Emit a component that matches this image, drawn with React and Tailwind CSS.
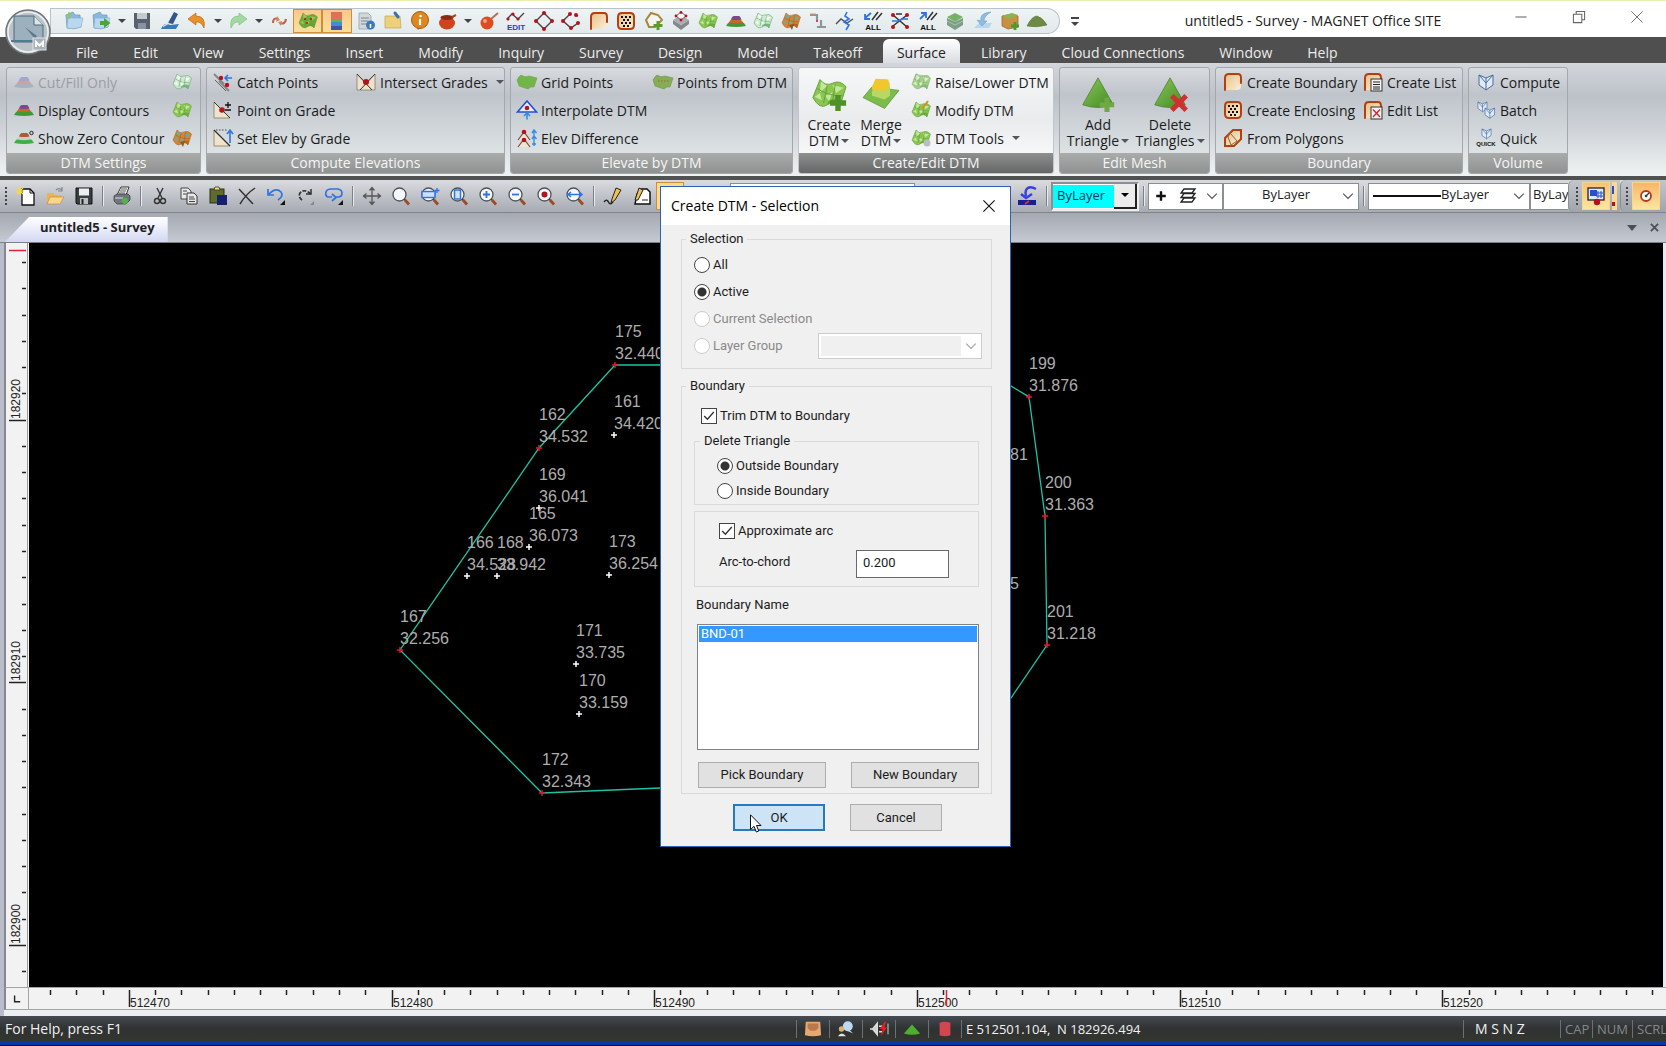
import { useState } from "react";
import clsx from "clsx";

/* ---------- icon building blocks (20 x 20 box) ---------- */

function Icon({ children, className = "size-5" }) {
  return (
    <svg viewBox="0 0 20 20" className={clsx("shrink-0 overflow-visible", className)} fill="none" aria-hidden="true">
      {children}
    </svg>
  );
}

const Dot = ({ x, y, r = 2 }) => <circle cx={x} cy={y} r={r} fill="#b5121b" />;

const Mesh = ({ fill = "#8bc653", light = "#c3e89a", dark = "#5f9f36" }) => (
  <>
    <path d="M5 2 Q8 6 12 4 T19.500 6 L16 17 Q13 13 9 16 T1 12 Z" fill={fill} stroke={dark} strokeWidth=".5" />
    <path d="M5.500 3 L9 5.500 L5 9 Z M12 5 L18 6.500 L14 9.500 Z M8 11 L12 9 L10 14 Z M2 11.500 L5 9.500 L6 13.500 Z" fill={light} />
    <path d="M3.500 7 Q9 11 17.500 11 M9 5.500 L7 15 M13.500 4.500 L12 14" stroke={dark} strokeWidth=".5" />
    <path d="M9 16 Q13 13 16 17 L17 13 Q13 11.500 9.500 14 Z" fill={dark} opacity=".7" />
  </>
);

const Mound = ({ top = "#7b4a8a", mid = "#c06a2c", low = "#3f9a34" }) => (
  <>
    <path d="M0 15 Q3 10 6 10 H14 Q17 10 20 15 Q10 17 0 15 Z" fill={low} />
    <path d="M3 11.500 Q5 7.500 7 7.500 H13 Q15 8 17 11.500 Q10 13 3 11.500 Z" fill={mid} />
    <path d="M5 8.500 Q6 5 8 5 H13 Q14 5 15.500 8.500 Q10 9.500 5 8.500 Z" fill={top} />
  </>
);

const Plate = ({ d = "M2 18 V6 Q2 2 6 2 H15 Q18 2 18 6 V11" }) => (
  <>
    <path d="M2 18 V6 Q2 2 6 2 H15 Q18 2 18 6 V14 Q18 18 14 18 Z" fill="url(#tan)" />
    <path d={d} stroke="#b5400f" strokeWidth="2" strokeLinecap="round" />
  </>
);

const Triangle = () => (
  <path d="M10 1 L18.500 16 Q10 19 1.500 16 Z" fill="url(#treeGreen)" stroke="#4a7a28" strokeWidth=".4" />
);

const Lens = ({ children }) => (
  <>
    <path d="M12.500 12.500 L14 14" stroke="#333" strokeWidth="2.400" />
    <path d="M14 14 L18 18.500" stroke="#a04a22" strokeWidth="2.800" />
    <circle cx="8.500" cy="8.500" r="6.500" fill="#f4f8fb" stroke="#4d5359" strokeWidth="1.300" />
    {children}
  </>
);

const Cube = () => (
  <>
    <path d="M3 3 L10 6 L17 3 V13 L10 18 L3 13 Z" fill="#dfeaf8" stroke="#4a6a9c" />
    <path d="M10 6 V18 M3 3 L10 11 L17 3" stroke="#4a6a9c" />
  </>
);

const Fold = () => (
  <>
    <path d="M2 4 L9 1 L11 4 H16 L17 16 Q10 19 3 17 Z" fill="#8db8dd" stroke="#6b96bd" strokeWidth=".7" />
    <path d="M4 7 H19 L17 16 Q10 19 3 17 Z" fill="#b9d8f0" stroke="#7ba6cc" strokeWidth=".5" />
  </>
);

const SmallText = ({ children, fill = "#111", y = 19, size = 8 }) => (
  <text x="10" y={y} textAnchor="middle" fontSize={size} fontWeight="700" fontFamily="Liberation Sans, sans-serif" fill={fill}>
    {children}
  </text>
);

const art = {
  newJob: <><Fold /><path d="M5 1 V8 M1.500 4.500 H8.500" stroke="#8ccc4e" strokeWidth="1.500" /></>,
  openJob: <><Fold /><path d="M9 10 H13 V7 L19.500 12 L13 17 V14 H9 Z" fill="#4aa63a" /></>,
  disk: <><path d="M2 2 H18 V18 H4 L2 16 Z" fill="#59616c" /><rect x="5" y="2" width="10" height="6" fill="#c3cad3" /><rect x="6" y="12" width="8" height="6" fill="#8993a0" /></>,
  survey: <><path d="M8 12 L14 1 L18 3 L13 13 Z" fill="#35568a" /><path d="M1 18 Q4 11 10 14 L19 13 L16 18 Z" fill="#3f78b8" /><path d="M3 15.500 L9 12" stroke="#d9e6f2" strokeWidth="1.300" /></>,
  undo: <path d="M1 8 L9 2 V5 Q19 5 17 17 Q14 10 9 11 V14 Z" fill="#e8912a" stroke="#b96a12" strokeWidth=".7" />,
  redo: <path d="M19 8 L11 2 V5 Q1 5 3 17 Q6 10 11 11 V14 Z" fill="#a3d9a0" stroke="#7fbf83" strokeWidth=".7" />,
  sync: <><path d="M4 12 Q4 6 9 8 M17 8 Q16 14 11 12" stroke="#c7604d" strokeWidth="2.200" /><path d="M8 5 L11 9 L7 11 Z M12 15 L9 11 L13 10 Z" fill="#d08a5e" /></>,
  meshDots: <><Mesh fill="#6ea834" light="#95c95a" /><Dot x={7} y={8} r={1} /><Dot x={13} y={8} r={1} /><Dot x={9} y={12} r={1} /></>,
  legend: <><rect x="4" y="1" width="11" height="7" fill="#e0705a" /><rect x="4" y="8" width="11" height="3" fill="#6bb04a" /><rect x="4" y="11" width="11" height="4" fill="#3c8fd0" /><rect x="4" y="15" width="11" height="4" fill="#4353a8" /></>,
  docInfo: <><path d="M3 2 H12 L15 5 V18 H3 Z" fill="#d2d7db" stroke="#9aa2a8" strokeWidth=".8" /><path d="M5 7 H13 M5 10 H12 M5 13 H11" stroke="#7e878e" /><circle cx="14.500" cy="14" r="4.500" fill="#3a79bd" /><path d="M14.500 13 V17" stroke="#fff" strokeWidth="1.600" /></>,
  note: <><path d="M2 5 H17 L18 17 H2 Z" fill="#ecd07a" stroke="#c5a448" strokeWidth=".7" /><path d="M12 2 L15 6" stroke="#3e6fb5" strokeWidth="3" strokeLinecap="round" /></>,
  info: <><path d="M6 15 L8 19 L12 15 Z" fill="#c87414" /><circle cx="10" cy="9" r="8.500" fill="#dd8720" stroke="#a85f10" /><path d="M10 8 V14" stroke="#fff" strokeWidth="2.200" /><circle cx="10.500" cy="5" r="1.300" fill="#fff" /></>,
  pot: <><ellipse cx="9" cy="12" rx="8" ry="6.500" fill="#d0431f" /><ellipse cx="9" cy="6.500" rx="6.500" ry="2.500" fill="#8c2b14" /><path d="M14 6 L18 4" stroke="#a44d20" strokeWidth="2" /></>,
  bomb: <><circle cx="8" cy="12" r="6.500" fill="#e04a22" /><circle cx="6" cy="10" r="2" fill="#f5a07c" /><path d="M12 8 L19 2" stroke="#a87850" strokeWidth="2" /></>,
  edit: <><path d="M1 8 L6 3 L12 8 L18 2" stroke="#444" strokeWidth="1.300" /><Dot x={2} y={8} r={1.600} /><Dot x={7} y={3} r={1.600} /><Dot x={12} y={8} r={1.600} /><SmallText fill="#1c3fd1">EDIT</SmallText></>,
  diamond: <><path d="M10 2 L18 10 L10 18 L2 10 Z" stroke="#444" strokeWidth="1.400" /><Dot x={10} y={2} /><Dot x={18} y={10} /><Dot x={10} y={18} /><Dot x={2} y={10} /></>,
  diamondOpen: <><path d="M15 4 L17 5 M9 3 L2 10 L10 17 L17 12" stroke="#444" strokeWidth="1.400" /><Dot x={15} y={4} /><Dot x={9} y={3} /><Dot x={2} y={10} /><Dot x={10} y={17} /><Dot x={17} y={12} /></>,
  plate: <Plate />,
  plateDots: (
    <>
      <Plate d="M2 6 Q2 2 6 2 H14 Q18 2 18 6 V14 Q18 18 14 18 H6 Q2 18 2 14 Z" />
      {[[6, 6], [10, 6], [14, 6], [8, 9], [12, 9], [6, 12], [10, 12], [14, 12], [8, 15], [12, 15]].map(([x, y]) => (
        <rect key={`${x}-${y}`} x={x - 1} y={y - 1} width="2" height="2" fill="#111" />
      ))}
    </>
  ),
  hexAdd: <><path d="M2 9 L7 2 L14 4 L18 9 L11 16 H5 Z" fill="#f6f4ee" stroke="#a8853f" strokeWidth="2" /><path d="M14 10 V19 M9.500 14.500 H18.500" stroke="#5b9a2c" strokeWidth="3" /></>,
  block: <><path d="M2 9 L10 14 L18 9 V13 L10 19 L2 13 Z" fill="#85898e" /><path d="M10 4 L18 9 L10 14 L2 9 Z" fill="#a9adb2" /><path d="M10 1 L15 5 L10 9 L5 5 Z" fill="#f4f4f4" stroke="#666" /><Dot x={10} y={1.500} r={1.400} /><Dot x={15} y={5} r={1.400} /><Dot x={5} y={5} r={1.400} /><Dot x={10} y={9} r={1.400} /></>,
  mesh: <Mesh />,
  mound: <Mound />,
  meshWire: <Mesh fill="#cfe8cf" light="#f2faf2" dark="#4fa35a" />,
  meshWarm: <><Mesh fill="#d98233" light="#5fb3a0" dark="#a45a1c" /><path d="M8 14 L13 13 L11 19 Z" fill="#8a5a2b" /></>,
  steps: <><path d="M2 4 H9 V9 M9 16 H17 M13 9 V16 H18" stroke="#8f9499" strokeWidth="2.200" /><Dot x={9} y={10} r={1} /><path d="M2 3 H8" stroke="#c2a35c" /></>,
  breakline: <><path d="M1 13 L6 8 L12 12 L18 8" stroke="#555" strokeWidth="1.500" /><path d="M12 1 L10 5 L14 8 L9 11 L14 14 L11 19" stroke="#2f74e0" strokeWidth="1.600" /></>,
  allDown: <><path d="M8 2 L2 7 M2 3 V8 H7" stroke="#2f74e0" strokeWidth="1.800" /><path d="M15 1 L9 9 M19 2 L13 9" stroke="#333" strokeWidth="1.500" /><SmallText>ALL</SmallText></>,
  cross: <><path d="M3 4 L17 16 M3 15 L17 4 M6 3 H12" stroke="#333" strokeWidth="1.500" /><path d="M2 10 H8 L12 8 H18" stroke="#2f74e0" strokeWidth="1.500" /><Dot x={3} y={4} /><Dot x={17} y={4} /><Dot x={3} y={16} /><Dot x={17} y={16} /></>,
  allUp: <><path d="M2 8 L8 2 M3 2 H8 V7" stroke="#2f74e0" strokeWidth="1.800" /><path d="M15 1 L9 9 M19 2 L13 9" stroke="#333" strokeWidth="1.500" /><SmallText>ALL</SmallText></>,
  layersGreen: <><path d="M2 7 L10 11 L18 7 V14 L10 19 L2 14 Z" fill="#7f9c86" /><path d="M2 6 L10 2 L18 6 L10 11 Z" fill="#74b266" /><path d="M2 10 L10 14 L18 10" stroke="#a9c4ae" /></>,
  sweep: <><path d="M1 17 H16 L19 12 H6 Z" fill="#b8d6ec" /><path d="M18 1 Q6 2 8 10 L4 9 L9 15 L14 10 L11 10 Q11 5 18 1 Z" fill="#8fbce0" stroke="#6f9fc7" strokeWidth=".6" /></>,
  crate: <><path d="M2 5 L12 3 L18 5 V16 L8 18 L2 15 Z" fill="#c98f45" stroke="#8f6026" strokeWidth=".7" /><path d="M2 5 L12 2 L18 4 L9 8 Z" fill="#86b84c" /><path d="M15 11 V19 M11 15 H19" stroke="#4b9a2c" strokeWidth="2.800" /></>,
  dune: <path d="M0 15 Q5 5 10 5 Q16 7 20 14 Q10 17 0 15 Z" fill="#6f8a45" stroke="#55702f" strokeWidth=".6" />,
  cutFill: <Mound top="#8c96c9" mid="#cf8e94" low="#a1a6b4" />,
  zero: <><Mound top="#b3593a" mid="#c9cfc4" low="#3fae48" /><circle cx="17.500" cy="5" r="1.700" stroke="#222" /></>,
  catch: <><path d="M1 2 L11 12 M6 9 L16 19" stroke="#888" strokeWidth="2" /><Dot x={8} y={6} r={2.200} /><Dot x={14} y={13} r={2.200} /><path d="M19 6 H13 M15 3 L12 6 L15 9" stroke="#2f74e0" strokeWidth="1.600" /><path d="M2 8 L13 19" stroke="#333" strokeWidth=".7" /></>,
  onGrade: <><path d="M1 2 V18 H17 Z" fill="#efe3cd" stroke="#8a7a5a" strokeWidth=".8" /><path d="M1 2 L17 18" stroke="#333" /><Dot x={9} y={10} r={2.800} /><path d="M15 2 V8 M12 5 H18 M12 10 H18" stroke="#111" strokeWidth="1.300" /></>,
  elevGrade: <><path d="M1 2 V18 H17 Z" fill="#efe3cd" stroke="#8a7a5a" strokeWidth=".8" /><path d="M1 2 L17 18" stroke="#333" strokeWidth="1.300" /><path d="M3 2 H14" stroke="#444" strokeDasharray="1.500 1.500" /><path d="M17 15 V4 M14 6 L17 2 L20 6" stroke="#2f74e0" strokeWidth="1.600" /></>,
  intersect: <><path d="M1 2 V18 H19 V2 L10 11 Z" fill="#efe3cd" stroke="#8a7a5a" strokeWidth=".8" /><path d="M1 2 L16 18 M19 2 L4 18" stroke="#333" /><Dot x={10} y={10} r={3} /></>,
  gridPts: <path d="M0 8 Q2 4 4 3 Q8 6 12 4 Q16 5 20 6 L17 15 Q14 14 11 17 L2 14 Z" fill="#74b54a" stroke="#6aa544" strokeWidth=".6" />,
  fromDtm: <><path d="M0 8 Q2 4 4 3 Q8 6 12 4 Q16 5 20 6 L17 15 Q14 14 11 17 L2 14 Z" fill="#84ad55" stroke="#6f9340" strokeWidth=".6" /><path d="M5 9 H16" stroke="#a9603a" strokeDasharray="1.500 1.500" /></>,
  interp: <><path d="M10 1 L19.500 12 H.500 Z" fill="#e8edf8" stroke="#2450d8" strokeWidth="1.600" /><Dot x={10} y={8} r={2.300} /><path d="M10 19.500 V13 M7 16 L10 13 L13 16" stroke="#2f8fe8" strokeWidth="1.600" /></>,
  elevDiff: <><path d="M1 12 L7 4 L13 12 M1 19 L7 11 L13 19" stroke="#7a4a3a" strokeWidth="1.200" fill="#f0e4d0" /><Dot x={7} y={4} r={2.300} /><Dot x={7} y={12} r={2.300} /><path d="M17 18 V3 M15 5 L17 2 L19.500 5 M15 11 L17 8 L19.500 11 M15 16 H19" stroke="#2f8fe8" strokeWidth="1.400" /></>,
  raise: <><path d="M5 1 Q10 4 18 3 L15 9 L2 8 Z" fill="#c5cfc2" /><Mesh fill="#a5cf8a" light="#dcefd0" dark="#7fae6c" /></>,
  modify: <><Mesh /><path d="M11 9 L17 1" stroke="#d88a2c" strokeWidth="2" /></>,
  tools: <><Mesh /><circle cx="16" cy="15" r="3.500" fill="#b9bec2" /></>,
  createDtm: <><Mesh /><path d="M15 10.500 V19.500 M10.500 15 H19.500" stroke="#4f9127" strokeWidth="3" /></>,
  mergeDtm: <><path d="M0 12 L5 6 L20 8 L12 18 Z" fill="#7cbc4b" stroke="#5a9632" strokeWidth=".4" /><path d="M5 9 L7 2 H13 L15 6 V11 L12 13 L5 11 Z" fill="#b9d765" /><path d="M5 6 L7 1.500 L14 2 L15 5 L12 8.500 L5 7.500 Z" fill="#f0c72c" /></>,
  addTri: <><Triangle /><path d="M15 12 V20 M11 16 H19" stroke="#6fa845" strokeWidth="2.800" /></>,
  delTri: <><Triangle /><path d="M11 11 L19 19 M19 11 L11 19" stroke="#cf3030" strokeWidth="2.800" /></>,
  polygons: <><path d="M2 10 L10 2 H18 V11 L11 18 H2 Z" fill="url(#tan)" stroke="#b5400f" strokeWidth="2" /><path d="M7 5 L14 13 L8 17 L5 9 Z" stroke="#8a6a3a" /></>,
  listNew: <><Plate /><rect x="8" y="7" width="11" height="12" fill="#f3f3f3" stroke="#333" /><path d="M10 10 H17 M10 12.500 H17 M10 15 H17 M10 17 H17" stroke="#222" /></>,
  listEdit: <><Plate /><rect x="8" y="7" width="11" height="12" fill="#f3f3f3" stroke="#333" /><path d="M10 9.500 L17 17 M17 9.500 L10 17" stroke="#cf2a2a" strokeWidth="1.400" /></>,
  cube: <Cube />,
  cubes: <><g transform="scale(.65)"><Cube /></g><g transform="translate(7 6) scale(.68)"><Cube /></g></>,
  quick: <><g transform="translate(4 -1) scale(.65)"><Cube /></g><SmallText size={6} y={18}>QUICK</SmallText></>,
  page: <><path d="M6 3 H14 L18 7 V19 H6 Z" fill="#fff" stroke="#111" strokeWidth="1.300" /><path d="M14 3 V7 H18" stroke="#111" /><path d="M4 1 V9 M0 5 H8 M1 2 L7 8 M7 2 L1 8" stroke="#f2dc3c" strokeWidth="1.200" /></>,
  folder: <><path d="M2 7 H8 L10 9 H16 V18 H2 Z" fill="#e7b653" /><path d="M5 11 H19 L15 18 H2 Z" fill="#f7d68c" stroke="#b8862e" strokeWidth=".6" /><path d="M11 4 Q14 1 17 4 M17 1 V5 H13" stroke="#7f868c" strokeWidth="1.200" /></>,
  floppy: <><path d="M2 2 H18 V18 H3 L2 17 Z" fill="#3c3f42" stroke="#111" /><rect x="5" y="2.500" width="10" height="7" fill="#eceff1" /><rect x="6" y="12" width="8" height="6" fill="#b9bec2" /><rect x="7.500" y="13" width="2" height="5" fill="#222" /></>,
  printer: <><path d="M5 9 L9 1 H17 L14 9 Z" fill="#fff" stroke="#333" /><path d="M2 10 L5 8 H16 L18 10 V14 L14 18 H5 L2 15 Z" fill="#70767d" stroke="#333" strokeWidth=".7" /><path d="M9 3 H15 M8 5 H14 M7 7 H13" stroke="#555" /><circle cx="13" cy="15" r="3" fill="#4fb548" /><path d="M3 12 H11" stroke="#d9dde0" /></>,
  cut: <><path d="M7 2 L12 12 M13 2 L8 12" stroke="#333" strokeWidth="1.400" /><circle cx="7" cy="15" r="2.500" stroke="#333" strokeWidth="1.400" /><circle cx="13" cy="15" r="2.500" stroke="#333" strokeWidth="1.400" /></>,
  copy: <><path d="M2 2 H9 L12 5 V13 H2 Z" fill="#e9e9e9" stroke="#444" /><path d="M8 7 H15 L18 10 V18 H8 Z" fill="#e9e9e9" stroke="#333" /><path d="M4 5 H8 M4 8 H7 M10 11 H15 M10 13 H16 M10 15.500 H16" stroke="#444" /></>,
  paste: <><rect x="2" y="3" width="14" height="14" fill="#5e6b2f" stroke="#2a2f15" /><path d="M6 4 L7 1 H11 L12 4 Z" fill="#f2df6a" stroke="#333" strokeWidth=".8" /><rect x="9" y="9" width="10" height="10" fill="#17206e" /></>,
  erase: <path d="M2 3 L16 18 M18 2 Q9 8 3 18" stroke="#333" strokeWidth="1.500" />,
  undoLine: <><path d="M3 8 Q10 1 15 6 Q18 10 12 14 M2 3 V9 H8" stroke="#2f74e0" strokeWidth="1.700" /><path d="M19 14 V19 H14 Z" fill="#111" /></>,
  redoLine: <><path d="M16 8 Q9 2 5 7 Q3 11 7 14" stroke="#333" strokeWidth="1.700" strokeDasharray="4 1.500" /><path d="M16 3 V8 H11" stroke="#333" strokeWidth="1.500" /><path d="M19 15 V19 H15 Z" fill="#888" /></>,
  lasso: <><path d="M8 11 H4 Q1 10 2 6 Q3 3 7 3 H14 Q18 4 18 7 Q18 11 14 11 H11 M8 8 L12 11.500 L8 15" stroke="#2f74e0" strokeWidth="1.700" /><path d="M19 14 V19 H14 Z" fill="#111" /></>,
  pan: <path d="M10 2 V18 M2 10 H18 M7.500 4.500 L10 1.500 L12.500 4.500 M7.500 15.500 L10 18.500 L12.500 15.500 M4.500 7.500 L1.500 10 L4.500 12.500 M15.500 7.500 L18.500 10 L15.500 12.500" stroke="#555" strokeWidth="1.300" />,
  lens: <Lens />,
  lensArea: <Lens><rect x="2" y="5.500" width="13" height="6" fill="#cfe2fb" stroke="#2f74e0" strokeWidth="1.500" /><path d="M17 2 V7 M14.500 4.500 H19.500" stroke="#2f74e0" strokeWidth="1.300" /></Lens>,
  lensPage: <Lens><rect x="5.500" y="4" width="6" height="9" fill="#cfe2fb" stroke="#2f74e0" strokeWidth="1.500" /></Lens>,
  lensIn: <Lens><path d="M8.500 5 V12 M5 8.500 H12" stroke="#2f74e0" strokeWidth="1.800" /></Lens>,
  lensOut: <Lens><path d="M5 8.500 H12" stroke="#2f74e0" strokeWidth="1.800" /></Lens>,
  lensDot: <Lens><Dot x={8.500} y={8.500} r={3} /></Lens>,
  lensWide: <Lens><path d="M3 8.500 H17 M6 6 L3 8.500 L6 11 M14 6 L17 8.500 L14 11" stroke="#2f74e0" strokeWidth="1.500" /></Lens>,
  pencil: <><path d="M9 13 L13 2 L18 4 L12 14 L8 17 Z" fill="#f0c14e" stroke="#222" /><path d="M1 16 Q4 12 6 17 Q8 19 10 16" stroke="#222" strokeWidth="1.300" /></>,
  pencilPage: <><path d="M9 3 H15 L18 6 V18 H3 L5 8 Z" fill="#fff" stroke="#111" strokeWidth="1.500" /><path d="M3 14 L7 2 L11 4 L6 14 Z" fill="#f0c14e" stroke="#222" /><path d="M10 14 H16" stroke="#222" /></>,
  dropIn: <><path d="M19 3 Q12 -1 9 4 Q8 7 9 10 M4 8 L9 12 L15 8" stroke="#3a3fe0" strokeWidth="2.400" /><path d="M1 14 H19 V19 H1 Z" fill="#1a1f8c" /><path d="M8 18 L12 15" stroke="#d33" strokeWidth="1.600" /></>,
  stack: <path d="M6 3 H17 L14 7 H3 Z M6 7.500 H17 L14 11.500 H3 Z M6 12 H17 L14 16 H3 Z" stroke="#222" strokeWidth="1.300" fill="#fff" />,
  monitor: <><rect x="2" y="2" width="16" height="12" fill="#dfe6f4" stroke="#222" strokeWidth="1.300" /><path d="M4 4 H11 V10 H4 Z" fill="#2450d8" /><path d="M12 5 V12 M15 5 V12 M10 7 H17 M10 10 H17" stroke="#2450d8" /><Dot x={11} y={16} r={3.200} /></>,
  target: <><circle cx="10" cy="10" r="5" fill="#fff" stroke="#b53a1c" strokeWidth="1.800" /><path d="M10 10 L13 7" stroke="#333" strokeWidth="1.300" /><circle cx="10" cy="10" r="1.300" fill="#333" /></>,
  inbox: <><path d="M2 2 H18 L19 17 Q10 19 1 17 Z" fill="#e6a873" /><path d="M4 4 H16 V9 L13 12 H7 L4 9 Z" fill="#b9794a" /></>,
  chat: <><circle cx="12" cy="7" r="5.500" fill="#bcd9f2" /><path d="M14 11 L18 15 L11 12 Z" fill="#bcd9f2" /><circle cx="5" cy="10" r="3" fill="#d9b07a" /><path d="M1 18 Q5 12 10 18 Z" fill="#e8e4da" /></>,
  plug: <><path d="M0 10 H3 L8 4 V16 L3 10 M10 7 H14 M10 13 H14" stroke="#ddd" strokeWidth="1.800" fill="#ccc" /><path d="M16 2 L11 10 H14 L12 18 L19 8 H16 L18 2 Z" fill="#e3201f" /><path d="M20 4 V16" stroke="#ddd" /></>,
  peak: <path d="M10 5 L19 15 Q10 18 1 15 Z" fill="#4fae2c" />,
  redTile: <path d="M4 3 Q10 1 16 3 V17 Q10 19 4 17 Z" fill="#d2474f" />,
};

const Art = ({ name, className }) => <Icon className={className}>{art[name]}</Icon>;

const Caret = ({ className = "border-t-[#444]" }) => (
  <span className={clsx("inline-block border-x-4 border-t-4 border-x-transparent", className)} />
);

/* ---------- title bar ---------- */

const quickAccess = [
  "newJob", "openJob", "|", "disk", "survey", "undo", "|", "redo", "|", "sync", "meshDots", "legend", "docInfo", "note",
  "info", "pot", "|", "bomb", "edit", "diamond", "diamondOpen", "plate", "plateDots", "hexAdd", "block", "mesh", "mound",
  "meshWire", "meshWarm", "steps", "breakline", "allDown", "cross", "allUp", "layersGreen", "sweep", "crate", "dune",
];

function TitleBar() {
  return (
    <header className="flex h-[37px] shrink-0 border-t border-[#eceeae] bg-white">
      <div className="mt-[7px] ml-[50px] flex h-[26px] w-[1010px] shrink-0 items-stretch rounded-r-full rounded-tl-[10px] border border-[#b9c2c7] bg-linear-to-b from-[#eef3f4] to-[#e3eaec] pr-2 pl-[9px]">
        {quickAccess.map((name, i) =>
          name === "|" ? (
            <button key={i} aria-label="More" className="flex flex-1 items-center justify-center">
              <Caret />
            </button>
          ) : (
            <button
              key={i}
              aria-label={name}
              className={clsx(
                "flex flex-2 items-center justify-center",
                (name === "meshDots" || name === "legend") && "border border-[#c98f3c] bg-linear-to-b from-[#f9c98a] to-[#fbdf9c]"
              )}
            >
              <Art name={name} />
            </button>
          )
        )}
      </div>
      <button aria-label="Customize toolbar" className="flex w-[30px] shrink-0 flex-col items-center justify-center gap-[3px] pt-1">
        <span className="h-[2px] w-2 bg-[#444]" />
        <Caret />
      </button>
      <h1 className="flex-1 truncate pt-[6px] pl-11 text-center text-[14px] leading-7 text-[#222]">untitled5 - Survey - MAGNET Office SITE</h1>
      <div className="flex h-8 shrink-0">
        <button aria-label="Minimize" className="flex w-[58px] items-center justify-center">
          <Icon className="size-[14px]"><path d="M2 10 H18" stroke="#666" strokeWidth="1.500" /></Icon>
        </button>
        <button aria-label="Restore" className="flex w-[58px] items-center justify-center">
          <Icon className="size-[14px]"><path d="M2 6 H14 V18 H2 Z M6 6 V2 H18 V14 H14" stroke="#666" strokeWidth="1.500" /></Icon>
        </button>
        <button aria-label="Close" className="flex w-[58px] items-center justify-center">
          <Icon className="size-[14px]"><path d="M2 2 L18 18 M18 2 L2 18" stroke="#666" strokeWidth="1.300" /></Icon>
        </button>
      </div>
    </header>
  );
}

function AppButton() {
  return (
    <button aria-label="Application menu" className="absolute top-[9px] left-[5px] size-[46px]">
      <svg viewBox="0 0 46 46" className="size-full">
        <circle cx="23" cy="23" r="22" fill="#bcc3c8" stroke="#6f7578" strokeWidth="1.500" />
        <circle cx="23" cy="23" r="20" fill="none" stroke="#eef1f2" strokeWidth="1.500" />
        <path d="M9 7 H29 L38 16 V33 H9 Z" fill="#9cb0bd" stroke="#4f6b7b" />
        <path d="M29 7 V16 H38" fill="#dbe5ea" stroke="#4f6b7b" />
        <path d="M20 18 L30 30 L32 27 Z" fill="#5e7a8b" />
        <path d="M6 32 H32" stroke="#4f7c8e" strokeWidth="2" />
        <rect x="28" y="29" width="13" height="12" fill="#aab2b8" stroke="#dfe3e6" />
        <path d="M31 38 V33 L34.500 36.500 L38 33 V38" fill="none" stroke="#f6f8f9" strokeWidth="2" />
      </svg>
    </button>
  );
}

/* ---------- ribbon ---------- */

const tabs = [
  "File", "Edit", "View", "Settings", "Insert", "Modify", "Inquiry", "Survey", "Design", "Model", "Takeoff", "Surface",
  "Library", "Cloud Connections", "Window", "Help",
];

function Tabs() {
  return (
    <nav className="flex h-[26px] shrink-0 items-end gap-[7px] bg-[#4f4f4f] pl-[62px] text-[14px] text-[#ececec]">
      {tabs.map((tab) => (
        <button
          key={tab}
          className={clsx(
            "h-6 px-[14px] pt-[3px] leading-5 whitespace-nowrap",
            tab === "Surface" && "rounded-t-md bg-linear-to-b from-white to-[#d9dce1] text-[#222]"
          )}
        >
          {tab}
        </button>
      ))}
    </nav>
  );
}

function Panel({ title, className, active, children }) {
  return (
    <section
      className={clsx(
        "flex h-[107px] shrink-0 flex-col overflow-hidden rounded-[3px] border",
        active
          ? "border-[#c3c6c9] bg-linear-to-b from-[#f6f7f7] via-[#e9ebed] to-white"
          : "border-[#a3a8ad] bg-[linear-gradient(#d8dbdf,#bfc4cb_25%,#cdd2d7_50%,#e6ebec)]",
        className
      )}
    >
      <div className="flex flex-1">{children}</div>
      <h2
        className={clsx(
          "h-5 text-center text-[14px] leading-5 text-[#f5f5f5]",
          active ? "bg-linear-to-b from-[#8e9190] to-[#646766]" : "bg-linear-to-b from-[#a9acab] to-[#8f9291]"
        )}
      >
        {title}
      </h2>
    </section>
  );
}

function Tool({ icon, label, menu, disabled }) {
  return (
    <button disabled={disabled} className="flex h-7 items-center gap-1 text-[14px] whitespace-nowrap text-[#1c1c1c] disabled:text-[#9a9ea3]">
      <Art name={icon} className={disabled ? "size-5 opacity-70" : "size-5"} />
      {label}
      {menu && <Caret className="ml-1 border-t-[#555]" />}
    </button>
  );
}

function BigTool({ icon, lines, className }) {
  return (
    <button className={clsx("flex flex-col items-center pt-2 text-[14px] leading-4 text-[#1c1c1c]", className)}>
      <Art name={icon} className="size-9" />
      <span className="mt-[5px]">{lines[0]}</span>
      <span className="flex items-center gap-[2px]">
        {lines[1]}
        <Caret className="border-t-[#555]" />
      </span>
    </button>
  );
}

function Ribbon() {
  return (
    <div className="flex h-[113px] shrink-0 gap-[5px] overflow-hidden bg-[linear-gradient(#d3d6da,#bcc1c9_30%,#d0d4d9_60%,#f0f3f3)] pt-1 pl-[6px]">
      <Panel title="DTM Settings" className="w-[195px]">
        <div className="flex flex-1 flex-col pl-[7px]">
          <Tool icon="cutFill" label="Cut/Fill Only" disabled />
          <Tool icon="mound" label="Display Contours" />
          <Tool icon="zero" label="Show Zero Contour" />
        </div>
        <div className="flex flex-col pr-2">
          {["meshWire", "mesh", "meshWarm"].map((name) => (
            <button key={name} aria-label={name} className="flex h-7 items-center">
              <Art name={name} />
            </button>
          ))}
        </div>
      </Panel>
      <Panel title="Compute Elevations" className="w-[299px]">
        <div className="flex w-[149px] flex-col pl-[6px]">
          <Tool icon="catch" label="Catch Points" />
          <Tool icon="onGrade" label="Point on Grade" />
          <Tool icon="elevGrade" label="Set Elev by Grade" />
        </div>
        <Tool icon="intersect" label="Intersect Grades" menu />
      </Panel>
      <Panel title="Elevate by DTM" className="w-[283px]">
        <div className="flex w-[142px] flex-col pl-[6px]">
          <Tool icon="gridPts" label="Grid Points" />
          <Tool icon="interp" label="Interpolate DTM" />
          <Tool icon="elevDiff" label="Elev Difference" />
        </div>
        <Tool icon="fromDtm" label="Points from DTM" />
      </Panel>
      <Panel title="Create/Edit DTM" className="w-[256px]" active>
        <div className="flex pr-1 pl-1">
          <BigTool icon="createDtm" lines={["Create", "DTM"]} className="w-[52px]" />
          <BigTool icon="mergeDtm" lines={["Merge", "DTM"]} className="w-[52px]" />
        </div>
        <div className="flex flex-col">
          <Tool icon="raise" label="Raise/Lower DTM" />
          <Tool icon="modify" label="Modify DTM" />
          <Tool icon="tools" label="DTM Tools" menu />
        </div>
      </Panel>
      <Panel title="Edit Mesh" className="w-[151px]">
        <div className="flex pl-[2px]">
          <BigTool icon="addTri" lines={["Add", "Triangle"]} className="w-[72px]" />
          <BigTool icon="delTri" lines={["Delete", "Triangles"]} className="w-[72px]" />
        </div>
      </Panel>
      <Panel title="Boundary" className="w-[248px]">
        <div className="flex w-[147px] flex-col pl-[7px]">
          <Tool icon="plate" label="Create Boundary" />
          <Tool icon="plateDots" label="Create Enclosing" />
          <Tool icon="polygons" label="From Polygons" />
        </div>
        <div className="flex flex-col">
          <Tool icon="listNew" label="Create List" />
          <Tool icon="listEdit" label="Edit List" />
        </div>
      </Panel>
      <Panel title="Volume" className="w-[100px]">
        <div className="flex flex-col pl-[7px]">
          <Tool icon="cube" label="Compute" />
          <Tool icon="cubes" label="Batch" />
          <Tool icon="quick" label="Quick" />
        </div>
      </Panel>
    </div>
  );
}

/* ---------- standard toolbar ---------- */

const tools = [
  "page", "folder", "floppy", "|", "printer", "|", "cut", "copy", "paste", "erase", "undoLine", "redoLine", "lasso", "|",
  "pan", "lens", "lensArea", "lensPage", "lensIn", "lensOut", "lensDot", "lensWide", "|", "pencil", "pencilPage",
];

const Grip = () => (
  <span className="flex w-[11px] shrink-0 flex-col items-center justify-center gap-[2px]">
    {[0, 1, 2, 3, 4].map((i) => (
      <span key={i} className="size-[2px] bg-[#444]" />
    ))}
  </span>
);

const Divider = () => (
  <span className="flex w-[9px] shrink-0 items-center justify-center">
    <span className="h-5 w-[2px] border-l border-[#7d8187] bg-[#e8eaec]" />
  </span>
);

const Chevron = ({ className = "text-[#555]" }) => (
  <Icon className={clsx("pointer-events-none size-3", className)}>
    <path d="M2 6 L10 14 L18 6" stroke="currentColor" strokeWidth="2" />
  </Icon>
);

function Combo({ label, value, className, selectClass, children, bare }) {
  return (
    <div className={clsx("relative flex h-[27px] shrink-0 items-center self-center border border-[#8b8f94] bg-white", className)}>
      {children}
      <select aria-label={label} className={clsx("h-full min-w-0 flex-1 appearance-none bg-transparent pb-[2px] text-[13px] text-[#222] outline-none", selectClass)}>
        <option>{value}</option>
      </select>
      {!bare && (
        <span className="pointer-events-none absolute inset-y-0 right-1 flex items-center">
          <Chevron />
        </span>
      )}
    </div>
  );
}

function Toolbar() {
  return (
    <div className="flex h-[33px] shrink-0 overflow-hidden border-b border-[#7f838a] bg-linear-to-b from-[#d9dbdf] to-[#a7abb2]">
      <Grip />
      {tools.map((name, i) =>
        name === "|" ? (
          <Divider key={i} />
        ) : (
          <button key={i} aria-label={name} className="flex w-[29px] shrink-0 items-center justify-center">
            <Art name={name} />
          </button>
        )
      )}
      <button aria-label="Snap" className="my-[2px] w-7 shrink-0 border border-[#c98f3c] bg-[#fbd98e]" />
      <Combo label="Style" value="" className="ml-[46px] w-[185px]" />
      <button aria-label="Import layer" className="ml-24 flex w-[31px] shrink-0 items-center justify-center">
        <Art name="dropIn" />
      </button>
      <Divider />
      <div className="flex h-[29px] w-[88px] shrink-0 items-center self-center border-2 border-[#8b8f94] border-r-[#eee] border-b-[#eee] bg-white">
        <select aria-label="Color" className="h-[23px] w-[61px] appearance-none bg-[#00ffff] pl-1 text-[13px] text-[#0a3a5a] outline-none">
          <option>ByLayer</option>
        </select>
        <span className="pointer-events-none flex h-[25px] flex-1 items-center justify-center border-r-2 border-b-2 border-[#222] bg-[#ececec]">
          <Caret className="border-t-black" />
        </span>
      </div>
      <Divider />
      <button aria-label="Layers" className="flex h-[27px] w-[75px] shrink-0 items-center justify-between self-center border border-[#8b8f94] bg-white px-1">
        <Icon className="size-4"><path d="M10 4 V16 M4 10 H16" stroke="#111" strokeWidth="3" /></Icon>
        <Art name="stack" />
        <Chevron />
      </button>
      <Combo label="Layer" value="ByLayer" className="w-[136px]" selectClass="pl-[38px]" />
      <Divider />
      <Combo label="Line type" value="ByLayer" className="w-[162px]">
        <span className="ml-1 h-[2px] w-[68px] bg-[#111]" />
      </Combo>
      <Combo label="Line weight" value="ByLayer" className="w-[38px] border-r-0" selectClass="pl-[2px]" bare />
      <div className="flex w-[52px] shrink-0 rounded-l-md border-l border-[#8b8f94] bg-linear-to-b from-[#c3c6cb] to-[#a0a4ab] pl-[2px]">
        <Grip />
        <button aria-label="Display" className="my-[2px] flex w-7 items-center justify-center border border-[#f3d98e] bg-linear-to-b from-[#f9c078] to-[#fbe6a0]">
          <Art name="monitor" />
        </button>
        <span className="my-[2px] ml-[2px] flex w-[5px] flex-col justify-around bg-[#fbd98e]">
          <span className="h-2 w-[2px] bg-[#2b4fc0]" />
          <span className="h-1 w-[3px] bg-[#b5121b]" />
        </span>
      </div>
      <div className="flex flex-1 rounded-l-md border-l border-[#8b8f94] bg-linear-to-b from-[#c3c6cb] to-[#a0a4ab]">
        <Grip />
        <button aria-label="Point snap" className="my-[2px] flex w-7 shrink-0 items-center justify-center border border-[#f3d98e] bg-linear-to-b from-[#f9b468] to-[#fbe6a0]">
          <Art name="target" />
        </button>
      </div>
    </div>
  );
}

function DocumentBar() {
  return (
    <div className="flex h-[30px] shrink-0 items-end border-b border-[#7d8085] bg-linear-to-b from-[#a3a8b1] to-[#c6cad2] pl-[5px]">
      <div className="flex h-full flex-1 items-end">
        <button className="h-[25px] bg-linear-to-b from-white to-[#d3d8f2] pr-[13px] pb-[6px] pl-[35px] text-[13px] leading-[18px] font-bold text-[#222] [clip-path:polygon(24px_0,100%_0,100%_100%,0_100%)]">
          untitled5 - Survey
        </button>
      </div>
      <button aria-label="Window list" className="flex h-full w-5 items-center justify-center">
        <span className="border-x-5 border-t-6 border-x-transparent border-t-[#4c5058]" />
      </button>
      <button aria-label="Close window" className="flex h-full w-6 items-center justify-center">
        <Icon className="size-[9px]"><path d="M2 2 L18 18 M18 2 L2 18" stroke="#4c5058" strokeWidth="4" /></Icon>
      </button>
    </div>
  );
}

/* ---------- drawing area ---------- */

const boundaryPoints = [
  { id: "175", z: "32.440", x: 586, y: 122 },
  { id: "162", z: "34.532", x: 510, y: 205 },
  { id: "167", z: "32.256", x: 371, y: 407 },
  { id: "172", z: "32.343", x: 513, y: 550 },
  { id: "199", z: "31.876", x: 1000, y: 154 },
  { id: "200", z: "31.363", x: 1016, y: 273 },
  { id: "201", z: "31.218", x: 1018, y: 402 },
];

const groundPoints = [
  { id: "161", z: "34.420", x: 585, y: 192 },
  { id: "169", z: "36.041", x: 510, y: 265 },
  { id: "165", z: "36.073", x: 500, y: 304 },
  { id: "166", z: "34.528", x: 438, y: 333 },
  { id: "168", z: "33.942", x: 468, y: 333 },
  { id: "173", z: "36.254", x: 580, y: 332 },
  { id: "171", z: "33.735", x: 547, y: 421 },
  { id: "170", z: "33.159", x: 550, y: 471 },
];

function SurveyPoint({ id, z, x, y, color }) {
  return (
    <g>
      <path d={`M${x - 3} ${y} H${x + 3} M${x} ${y - 3} V${y + 3}`} stroke={color} strokeWidth="1.500" />
      <text x={x} y={y - 28}>{id}</text>
      <text x={x} y={y - 6}>{z}</text>
    </g>
  );
}

function Drawing() {
  return (
    <svg className="absolute inset-0 size-full" fontFamily="Liberation Sans, Arial, sans-serif" fontSize="16" fill="#adadad">
      <path
        d="M586 122 L510 205 L371 407 L513 550 L631 545 L800 542 L982 455 L1018 402 L1016 273 L1000 154 L951 124 L671 122 Z"
        fill="none"
        stroke="#1fc3a4"
        strokeWidth="1.300"
      />
      {groundPoints.map((p) => (
        <SurveyPoint key={p.id} {...p} color="#ffffff" />
      ))}
      {boundaryPoints.map((p) => (
        <SurveyPoint key={p.id} {...p} color="#e0182d" />
      ))}
      <text x="981" y="217">81</text>
      <text x="981" y="346">5</text>
    </svg>
  );
}

const STEP = 26.27; // ruler pixels per metre

function VerticalRuler() {
  return (
    <svg className="h-full w-[22px] shrink-0 border-r border-[#9a9a9a] bg-[#f1f2f1]" fontFamily="Liberation Sans, Arial, sans-serif" fontSize="12" fill="#222">
      {Array.from({ length: 28 }, (_, i) => {
        const y = Math.round(19 + i * STEP);
        return i % 10 === 6 ? (
          <g key={i}>
            <path d={`M3 ${y + 0.5} H20`} stroke="#222" strokeWidth="1.500" />
            <text transform={`translate(14 ${y - 1}) rotate(-90)`}>{182920 - (i - 6)}</text>
          </g>
        ) : (
          <path key={i} d={`M16 ${y + 0.5} H20`} stroke="#222" strokeWidth="1.500" />
        );
      })}
      <path d="M3 7.500 H20" stroke="#e02433" strokeWidth="1.500" />
    </svg>
  );
}

function HorizontalRuler() {
  return (
    <svg className="h-full min-w-0 flex-1" fontFamily="Liberation Sans, Arial, sans-serif" fontSize="12" fill="#222">
      {Array.from({ length: 62 }, (_, i) => {
        const x = Math.round(21 + i * STEP);
        return i % 10 === 3 ? (
          <g key={i}>
            <path d={`M${x + 0.5} 2 V19`} stroke="#222" strokeWidth="1.500" />
            <text x={x + 1} y="19">{512470 + (i - 3)}</text>
          </g>
        ) : (
          <path key={i} d={`M${x + 0.5} 2 V7`} stroke="#222" strokeWidth="1.500" />
        );
      })}
      <path d="M917.500 2 V18" stroke="#e02433" strokeWidth="1.500" />
    </svg>
  );
}

function Workspace() {
  return (
    <main className="flex min-h-0 flex-1 flex-col border-l-4 border-[#b9bdc9] bg-[#f1f2f1]">
      <div className="flex min-h-0 flex-1 border-l-2 border-[#85888e]">
        <VerticalRuler />
        <div className="relative ml-px flex-1 overflow-hidden bg-black">
          <Drawing />
        </div>
        <div className="w-[3px] bg-[#e8eaf0]" />
      </div>
      <div className="flex h-[23px] shrink-0 border-t border-b border-l-2 border-[#a2a4a6] border-l-[#85888e]">
        <div className="flex w-[23px] shrink-0 items-center justify-center border-r border-[#a2a4a6]">
          <Icon className="size-2"><path d="M4 1 V17 H18" stroke="#222" strokeWidth="3.500" /></Icon>
        </div>
        <HorizontalRuler />
      </div>
      <div className="h-[6px] shrink-0 bg-[#eceef2]" />
    </main>
  );
}

/* ---------- status bar ---------- */

function StatusBar() {
  return (
    <footer className="shrink-0">
      <div className="flex h-[25px] items-center overflow-hidden bg-linear-to-b from-[#454b52] via-[#303233] to-[#33352f] text-[13px] whitespace-nowrap text-[#f0f0f0]">
        <span className="flex-1 pl-[5px] text-[14px]">For Help, press F1</span>
        {["inbox", "chat", "plug", "peak", "redTile"].map((name) => (
          <button key={name} aria-label={name} className="flex h-[18px] w-[33px] shrink-0 items-center justify-center border-l border-[#6d7073]">
            <Art name={name} className="size-[18px]" />
          </button>
        ))}
        <span className="h-[18px] w-[502px] shrink-0 border-l border-[#6d7073] pl-1 leading-[18px] whitespace-pre">E 512501.104,  N 182926.494</span>
        <span className="h-[18px] w-[97px] shrink-0 border-l border-[#6d7073] pl-[11px] text-[14px] leading-[18px]">M S N Z</span>
        <span className="h-[18px] w-8 shrink-0 border-l border-[#6d7073] pl-1 leading-[18px] text-[#85888a]">CAP</span>
        <span className="h-[18px] w-10 shrink-0 border-l border-[#6d7073] pl-1 leading-[18px] text-[#85888a]">NUM</span>
        <span className="h-[18px] w-[34px] shrink-0 border-l border-[#6d7073] pl-1 leading-[18px] text-[#85888a]">SCRL</span>
      </div>
      <div className="h-[5px] border-b border-[#02064a] bg-[#0a38a3]" />
    </footer>
  );
}

/* ---------- Create DTM dialog ---------- */

function Radio({ name, label, className, ...props }) {
  return (
    <label className={clsx("flex items-center gap-[3px]", props.disabled && "text-[#8a8a8a]", className)}>
      <input
        type="radio"
        name={name}
        className="size-4 appearance-none rounded-full border border-[#444] bg-white checked:bg-[radial-gradient(circle,#333_4px,#fff_5px)] disabled:border-[#ccc]"
        {...props}
      />
      {label}
    </label>
  );
}

function Check({ label, className, ...props }) {
  return (
    <label className={clsx("flex h-6 items-center gap-[3px]", className)}>
      <span className="relative size-4">
        <input type="checkbox" className="peer block size-4 appearance-none border border-[#444] bg-white" {...props} />
        <Icon className="pointer-events-none absolute inset-0 hidden size-4 peer-checked:block">
          <path d="M4 10 L8 14 L16 5" stroke="#333" strokeWidth="1.700" />
        </Icon>
      </span>
      {label}
    </label>
  );
}

function Group({ legend, className, legendClass = "ml-1", children }) {
  return (
    <fieldset className={clsx("border border-[#dadada]", className)}>
      {legend && <legend className={clsx("px-1 leading-4", legendClass)}>{legend}</legend>}
      {children}
    </fieldset>
  );
}

const buttonStyle = "border border-[#adadad] bg-[#e1e1e1]";

function CreateDtmDialog() {
  const [source, setSource] = useState("Active");
  const [side, setSide] = useState("Outside Boundary");
  const [trim, setTrim] = useState(true);
  const [approx, setApprox] = useState(true);
  const [chord, setChord] = useState("0.200");

  return (
    <div
      role="dialog"
      aria-label="Create DTM - Selection"
      className="absolute top-[186px] left-[660px] w-[351px] border border-[#2a62b5] bg-[#f0f0f0] font-[Roboto,sans-serif] text-[13px] leading-4 text-[#1c1c1c]"
    >
      <div className="flex h-[38px] items-center justify-between bg-white pr-[14px] pl-[10px]">
        <h2 className="font-['Open_Sans',sans-serif] text-[14px] text-black">Create DTM - Selection</h2>
        <button aria-label="Close dialog">
          <Icon className="size-[14px]"><path d="M2 2 L18 18 M18 2 L2 18" stroke="#111" strokeWidth="1.600" /></Icon>
        </button>
      </div>

      <div className="pt-[6px] pr-[18px] pb-[15px] pl-5">
        <Group legend="Selection" className="h-[138px]">
          <div className="pt-1 pr-[9px] pl-3">
            {["All", "Active", "Current Selection"].map((name) => (
              <Radio
                key={name}
                name="source"
                label={name}
                className="h-[27px]"
                checked={source === name}
                disabled={name === "Current Selection"}
                onChange={() => setSource(name)}
              />
            ))}
            <div className="flex h-[27px] items-center justify-between">
              <Radio name="source" label="Layer Group" disabled checked={false} readOnly />
              <div className="flex h-[26px] w-[164px] items-center border border-[#ccc] bg-white pr-1 pl-[2px]">
                <select aria-label="Layer group" disabled className="h-5 flex-1 appearance-none bg-[#f0f0f0]" />
                <Chevron className="ml-1 text-[#a5a5a5]" />
              </div>
            </div>
          </div>
        </Group>

        <Group legend="Boundary" className="mt-[9px]">
          <div className="px-3 pt-[10px] pb-[5px]">
            <Check label="Trim DTM to Boundary" className="pl-[7px]" checked={trim} onChange={(e) => setTrim(e.target.checked)} />

            <Group legend="Delete Triangle" legendClass="ml-[5px]" className="mt-[5px] pb-px">
              <div className="pt-1 pl-[22px]">
                {["Outside Boundary", "Inside Boundary"].map((name) => (
                  <Radio key={name} name="side" label={name} className="h-[25px]" checked={side === name} onChange={() => setSide(name)} />
                ))}
              </div>
            </Group>

            <Group className="mt-[6px]">
              <div className="pt-[7px] pr-[29px] pb-2 pl-6">
                <Check label="Approximate arc" checked={approx} onChange={(e) => setApprox(e.target.checked)} />
                <div className="mt-[7px] flex items-center justify-between">
                  <label htmlFor="chord" className="pb-1">Arc-to-chord</label>
                  <input
                    id="chord"
                    value={chord}
                    onChange={(e) => setChord(e.target.value)}
                    className="h-7 w-[93px] border border-[#6a6a6a] bg-white px-[6px] pb-1 outline-none"
                  />
                </div>
              </div>
            </Group>

            <p id="boundary-name" className="mt-[10px] ml-[2px]">Boundary Name</p>
            <ul role="listbox" aria-labelledby="boundary-name" className="mt-[11px] ml-[3px] h-[126px] border border-[#7f8387] bg-white p-px">
              <li role="option" aria-selected="true" className="bg-[#3399ff] pl-[2px] text-white">BND-01</li>
            </ul>

            <div className="mt-3 ml-1 flex justify-between">
              <button className={clsx("h-[26px] w-32", buttonStyle)}>Pick Boundary</button>
              <button className={clsx("h-[26px] w-32", buttonStyle)}>New Boundary</button>
            </div>
          </div>
        </Group>

        <div className="mt-[10px] flex gap-[25px] pl-[52px]">
          <button className="h-[27px] w-23 border-2 border-[#2a79bd] bg-[#cce4f5]">OK</button>
          <button className={clsx("h-[27px] w-23", buttonStyle)}>Cancel</button>
        </div>
      </div>
    </div>
  );
}

const Pointer = () => (
  <svg viewBox="0 0 12 19" className="pointer-events-none absolute top-[814px] left-[750px] h-[19px] w-3">
    <path d="M.5 .8 V15.500 L4 12.300 L6.300 18 L8.800 17 L6.500 11.500 H11 Z" fill="#fff" stroke="#111" />
  </svg>
);

export default function App() {
  return (
    <div className="relative flex h-screen flex-col overflow-hidden bg-[#c6cad2] font-['Open_Sans',sans-serif]">
      <svg className="absolute size-0" aria-hidden="true">
        <linearGradient id="treeGreen" x1="0" y1="0" x2="1" y2="1">
          <stop offset="0" stopColor="#8cc65a" />
          <stop offset="1" stopColor="#3f8a22" />
        </linearGradient>
        <linearGradient id="tan" x1="0" y1="0" x2="1" y2="1">
          <stop offset="0" stopColor="#e9bf86" />
          <stop offset="1" stopColor="#fbf0da" />
        </linearGradient>
      </svg>
      <TitleBar />
      <Tabs />
      <AppButton />
      <Ribbon />
      <div className="h-1 shrink-0 bg-[#4f5251]" />
      <Toolbar />
      <DocumentBar />
      <Workspace />
      <StatusBar />
      <CreateDtmDialog />
      <Pointer />
    </div>
  );
}
